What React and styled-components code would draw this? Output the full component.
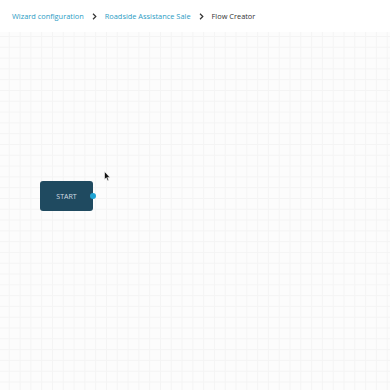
import React from "react";
import styled, { createGlobalStyle } from "styled-components";

const Global = createGlobalStyle`
  html, body { margin: 0; padding: 0; }
  body { font-family: "Open Sans", "Noto Sans", sans-serif; background: #fff; }
  #root { width: 390px; height: 390px; }
`;

const Page = styled.div`
  width: 390px;
  height: 390px;
  display: flex;
  flex-direction: column;
  overflow: hidden;
`;

const Header = styled.nav`
  height: 32px;
  flex: none;
  display: flex;
  align-items: center;
  padding: 0 12px;
  background: #fff;
  font-size: 7.4px;
`;

const Crumb = styled.span`
  color: ${(p) => (p.$active ? "#333" : "#2a9cc4")};
  white-space: nowrap;
`;

const Sep = styled.span`
  display: inline-flex;
  align-items: center;
  margin: 0 8px;
`;

const Canvas = styled.div`
  position: relative;
  flex: 1;
  background-color: #fcfcfc;
  background-image:
    linear-gradient(to right, #f4f4f4 1px, transparent 1px),
    linear-gradient(to bottom, #f4f4f4 1px, transparent 1px);
  background-size: 10.8px 10.8px;
  background-position: -2px 4px;
`;

const Node = styled.div`
  position: absolute;
  left: 40px;
  top: 149px;
  width: 53px;
  height: 30px;
  border-radius: 3px;
  background: #1f4a60;
  color: #d3dde3;
  font-size: 7px;
  display: flex;
  align-items: center;
  justify-content: center;
`;

const Handle = styled.span`
  position: absolute;
  right: -3px;
  top: 50%;
  width: 6px;
  height: 6px;
  margin-top: -3px;
  border-radius: 50%;
  background: #1ea3d3;
`;

const Cursor = styled.svg`
  position: absolute;
  left: 104px;
  top: 139px;
`;

const Chevron = () => (
  <svg width="5" height="7" viewBox="0 0 5 7">
    <path d="M1 0.8 L3.8 3.5 L1 6.2" fill="none" stroke="#333" strokeWidth="1.2" />
  </svg>
);

export default function App() {
  return (
    <>
      <Global />
      <Page>
        <Header>
          <Crumb>Wizard configuration</Crumb>
          <Sep><Chevron /></Sep>
          <Crumb>Roadside Assistance Sale</Crumb>
          <Sep><Chevron /></Sep>
          <Crumb $active>Flow Creator</Crumb>
        </Header>
        <Canvas>
          <Node>
            START
            <Handle />
          </Node>
          <Cursor width="7" height="11" viewBox="0 0 7 11">
            <path d="M0.5 0.5 L0.5 8.5 L2.3 6.8 L3.6 9.8 L4.8 9.3 L3.6 6.4 L6 6.4 Z" fill="#111" stroke="#fff" strokeWidth="0.6" />
          </Cursor>
        </Canvas>
      </Page>
    </>
  );
}
